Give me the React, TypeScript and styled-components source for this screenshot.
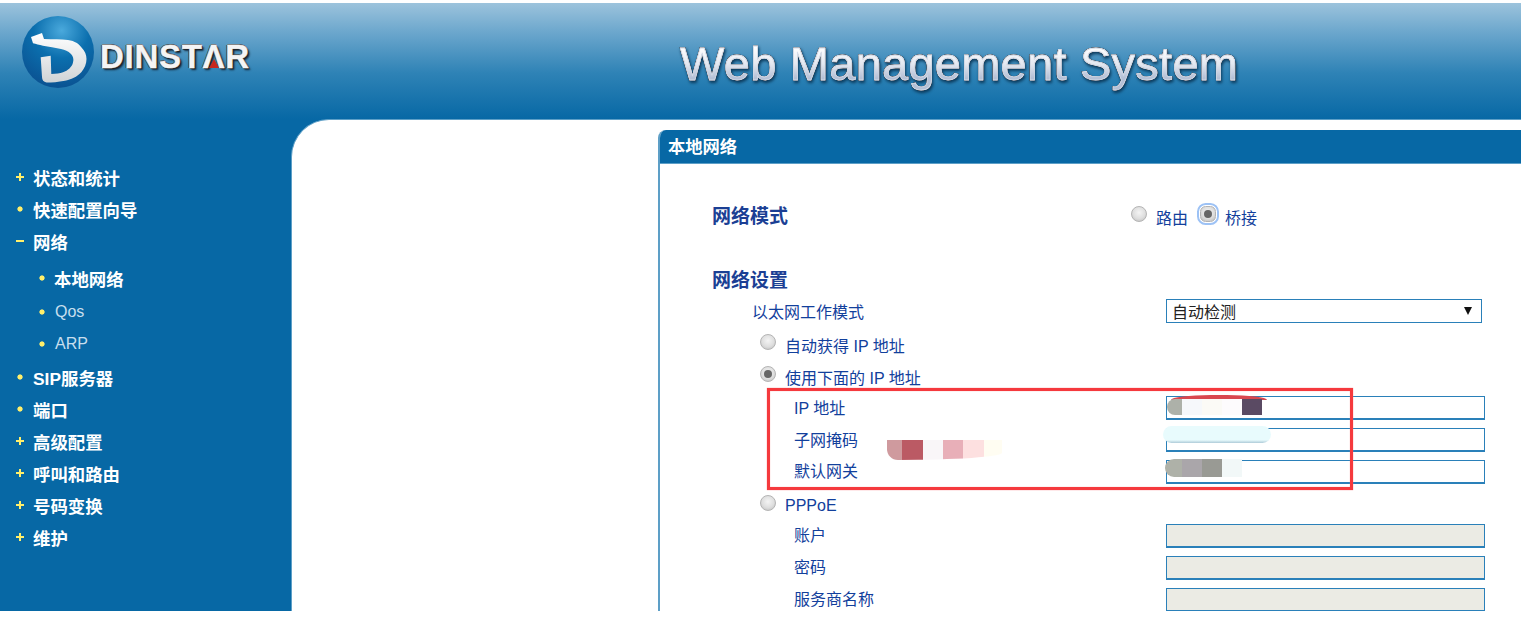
import React from 'react';
import styled, { createGlobalStyle } from 'styled-components';

const GlobalStyle = createGlobalStyle`
  html, body {
    margin: 0;
    padding: 0;
    background: #fff;
  }
  * {
    box-sizing: border-box;
  }
`;

const CJK = `"Liberation Sans", "Noto Sans CJK SC", sans-serif`;

const Page = styled.div`
  width: 1530px;
  height: 640px;
  padding: 3px 9px 29px 0;
  overflow: hidden;
  background: #fff;
  font-family: ${CJK};
`;

const Frame = styled.div`
  height: 608px;
  display: flex;
  flex-direction: column;
`;

const Header = styled.header`
  flex: 0 0 116px;
  display: flex;
  background: linear-gradient(180deg, #9cc3dc 0%, #6ca7cd 25%, #2f83b6 60%, #0768a5 100%);
`;

const LogoArea = styled.div`
  width: 292px;
  display: flex;
  align-items: flex-start;
  padding: 11px 0 0 20px;
`;

const LogoWord = styled.span`
  margin: 26px 0 0 4px;
  font: bold 33px "Liberation Sans", sans-serif;
  line-height: 34px;
  letter-spacing: 0.7px;
  color: #f4f4f4;
  -webkit-text-stroke: 0.4px #f4f4f4;
  text-shadow: 1px 1px 0 #222, -1px 0 0 #333, 0 -1px 0 #555, 2px 2px 2px #123;
`;

const RedA = styled.span`
  position: relative;
  display: inline-block;
  &::after {
    content: '';
    position: absolute;
    left: 50%;
    bottom: 6px;
    margin-left: -5px;
    border-left: 5px solid transparent;
    border-right: 5px solid transparent;
    border-bottom: 9px solid #c8281f;
  }
`;

const Title = styled.h1`
  margin: 33px 0 0 388px;
  height: 56px;
  font: 400 47px "Liberation Sans", sans-serif;
  line-height: 56px;
  letter-spacing: 0.25px;
  white-space: nowrap;
  color: transparent;
  -webkit-text-stroke: 0.8px #d3dbe8;
  background: linear-gradient(180deg, #fff 20%, #e4e8f0 50%, #b4c0d6 75%);
  background-clip: text;
  -webkit-background-clip: text;
  filter: drop-shadow(0 0 0.6px #0c141c) drop-shadow(0 0 0.6px #0c141c) drop-shadow(1px 2px 1.5px #0b3a5c);
`;

const Body = styled.div`
  flex: 1;
  display: flex;
  min-height: 0;
  background: #0768a5;
`;

const Sidebar = styled.nav`
  flex: 0 0 291px;
  padding-top: 42px;
`;

const MenuRow = styled.div<{ $sub?: boolean; $bold?: boolean; $gap?: number }>`
  height: 32px;
  display: flex;
  align-items: center;
  padding-left: ${(p) => (p.$sub ? 37 : 15)}px;
  padding-top: ${(p) => (p.$bold === false ? 3 : 0)}px;
  margin-top: ${(p) => p.$gap ?? 0}px;
  color: ${(p) => (p.$bold === false ? '#c7dfee' : '#fff')};
  font-size: ${(p) => (p.$bold === false ? 16 : 17.4)}px;
  font-weight: ${(p) => (p.$bold === false ? 400 : 700)};
`;

const MARK = '#ffef6b';
const hBar = `linear-gradient(${MARK}, ${MARK}) center / 8px 2px no-repeat`;
const vBar = `linear-gradient(${MARK}, ${MARK}) center / 2px 8px no-repeat`;
const dot = `radial-gradient(circle, ${MARK} 2.2px, transparent 3px)`;

const Marker = styled.span<{ $kind: 'plus' | 'minus' | 'dot'; $tight?: boolean }>`
  flex: none;
  width: 10px;
  height: 8px;
  margin-right: ${(p) => (p.$tight ? 7 : 8)}px;
  background: ${(p) => (p.$kind === 'plus' ? `${hBar}, ${vBar}` : p.$kind === 'minus' ? hBar : dot)};
`;

const Content = styled.main`
  flex: 1;
  min-width: 0;
  background: #fff;
  border-top: 1px solid #5d9fc7;
  border-left: 1px solid #5d9fc7;
  border-top-left-radius: 38px;
  padding: 10px 0 0 366px;
`;

const Panel = styled.section`
  height: 100%;
  border-left: 2px solid #5d9fc7;
  border-top-left-radius: 8px;
  overflow: hidden;
`;

const PanelHead = styled.div`
  height: 34px;
  margin-left: -2px;
  padding: 0 0 3px 10px;
  display: flex;
  align-items: center;
  background: #0768a5;
  border-bottom: 1px solid #5d9fc7;
  color: #fff;
  font-size: 17.3px;
  font-weight: 700;
`;

const PanelBody = styled.div`
  padding-left: 52px;
  color: #12409c;
  font-size: 16px;
`;

const Heading = styled.div`
  font-size: 19px;
  font-weight: 700;
  line-height: 28px;
  color: #1b3f94;
`;

const ModeRow = styled.div`
  height: 36px;
  margin-top: 35px;
  display: grid;
  grid-template-columns: 419px 1fr;
  align-items: center;
`;

const RadioGroup = styled.div`
  display: flex;
  align-items: center;
  padding-top: 4px;
  line-height: 20px;
`;

const Radio = styled.span<{ $checked?: boolean; $focus?: boolean; $left?: number; $raise?: number }>`
  flex: none;
  position: relative;
  top: ${(p) => -(p.$raise ?? 3)}px;
  width: 16px;
  height: 16px;
  border-radius: 50%;
  margin: 0 9px 0 ${(p) => p.$left ?? 0}px;
  background: radial-gradient(circle at 50% 40%, #f4f4f4 0%, #dedede 55%, #b9b9b9 100%);
  border: 1px solid #b4b4b4;
  ${(p) => p.$focus && 'outline: 2px solid #9dc2f5; outline-offset: 1px; border-radius: 35%;'}
  &::after {
    content: '';
    display: ${(p) => (p.$checked ? 'block' : 'none')};
    position: absolute;
    inset: 3px;
    border-radius: 50%;
    background: #666;
  }
`;

const SettingsHead = styled(Heading)`
  margin-top: 32px;
`;

const FormRow = styled.div<{ $indent: number }>`
  height: 32px;
  display: grid;
  grid-template-columns: ${(p) => 454 - p.$indent}px 319px;
  align-items: center;
  padding-left: ${(p) => p.$indent}px;
`;

const Label = styled.span<{ $up?: boolean }>`
  margin-bottom: ${(p) => (p.$up ? 2 : 0)}px;
`;

const SelectBox = styled.div`
  width: 316px;
  height: 24px;
  padding: 0 9px 0 5px;
  display: flex;
  align-items: center;
  justify-content: space-between;
  border: 1px solid #2a80b9;
  color: #222;
  font-size: 16px;
`;

const Arrow = styled.span`
  border-left: 4px solid transparent;
  border-right: 4px solid transparent;
  border-top: 8px solid #111;
`;

const OptionRow = styled.div<{ $pt?: number }>`
  height: 32px;
  padding: ${(p) => p.$pt ?? 4}px 0 0 48px;
  display: flex;
  align-items: center;
`;

const Field = styled.div<{ $disabled?: boolean }>`
  position: relative;
  width: 319px;
  height: 24px;
  margin-top: 2px;
  border: 1px solid #2a80b9;
  border-bottom-width: 2px;
  background: ${(p) => (p.$disabled ? '#ebebe4' : '#fff')};
`;

/* the pixelated patches that hide the addresses in the screenshot */
const Blur = styled.div<{ $left: number; $top: number; $w: number; $h: number; $bg: string; $round?: string }>`
  position: absolute;
  left: ${(p) => p.$left}px;
  top: ${(p) => p.$top}px;
  width: ${(p) => p.$w}px;
  height: ${(p) => p.$h}px;
  background: ${(p) => p.$bg};
  border-radius: ${(p) => p.$round ?? '0'};
`;

const Highlight = styled.div`
  position: absolute;
  left: 767px;
  top: 388px;
  width: 586px;
  height: 102px;
  border: 3px solid #f5393d;
  box-shadow: 0 0 1px #f5797c, inset 0 0 1px #f5797c;
  pointer-events: none;
`;

const DinstarMark = () => (
  <svg width="76" height="76" viewBox="0 0 76 76">
    <defs>
      <radialGradient id="ball" cx="0.55" cy="0.2" r="0.85">
        <stop offset="0" stopColor="#4aa9dc" />
        <stop offset="0.45" stopColor="#0b6fae" />
        <stop offset="1" stopColor="#0a4f8f" />
      </radialGradient>
      <linearGradient id="dee" x1="0" y1="0" x2="0" y2="1">
        <stop offset="0" stopColor="#fff" />
        <stop offset="1" stopColor="#cfd3d6" />
      </linearGradient>
    </defs>
    <circle cx="38" cy="38" r="36" fill="url(#ball)" />
    <path
      d="M11 23 L22 19 L24 25 C33 25.5 41 25 48 26 C55 27 59 30 61.5 33.5 C65 37 66.5 41 66.5 45 C66.5 50 64.5 54 61.5 58 C57 63 51 65.5 45 66.7 C38 68 32 68.5 26.5 68.5 C23.5 68 22 66 22 63 L20.7 43.3 L30.7 41.7 L31.3 60 C36 60 40 59.5 43 58.3 C48 56.5 52 53 53 48.5 C54 45 53 42 51 40 C48 37 45 36 41 35 C35 33.5 29 32.5 23 31.7 C19 31 16 30 13 29.3 Z"
      fill="url(#dee)"
    />
  </svg>
);

const menuBottom = ['高级配置', '呼叫和路由', '号码变换', '维护'];

export default function App() {
  return (
    <>
      <GlobalStyle />
      <Page>
        <Frame>
          <Header>
            <LogoArea>
              <DinstarMark />
              <LogoWord>
                DINST<RedA>Λ</RedA>R
              </LogoWord>
            </LogoArea>
            <Title>Web Management System</Title>
          </Header>
          <Body>
            <Sidebar>
              <MenuRow>
                <Marker $kind="plus" />
                状态和统计
              </MenuRow>
              <MenuRow>
                <Marker $kind="dot" />
                快速配置向导
              </MenuRow>
              <MenuRow>
                <Marker $kind="minus" />
                网络
              </MenuRow>
              <MenuRow $sub $gap={5}>
                <Marker $kind="dot" $tight />
                本地网络
              </MenuRow>
              <MenuRow $sub $bold={false}>
                <Marker $kind="dot" />
                Qos
              </MenuRow>
              <MenuRow $sub $bold={false}>
                <Marker $kind="dot" />
                ARP
              </MenuRow>
              <MenuRow $gap={3}>
                <Marker $kind="dot" />
                SIP服务器
              </MenuRow>
              <MenuRow>
                <Marker $kind="dot" />
                端口
              </MenuRow>
              {menuBottom.map((label) => (
                <MenuRow key={label}>
                  <Marker $kind="plus" />
                  {label}
                </MenuRow>
              ))}
            </Sidebar>
            <Content>
              <Panel>
                <PanelHead>本地网络</PanelHead>
                <PanelBody>
                  <ModeRow>
                    <Heading>网络模式</Heading>
                    <RadioGroup>
                      <Radio $raise={5} />
                      路由
                      <Radio $checked $focus $raise={5} $left={12} />
                      桥接
                    </RadioGroup>
                  </ModeRow>
                  <SettingsHead>网络设置</SettingsHead>
                  <FormRow $indent={40}>
                    <Label>以太网工作模式</Label>
                    <SelectBox>
                      自动检测
                      <Arrow />
                    </SelectBox>
                  </FormRow>
                  <OptionRow>
                    <Radio />
                    自动获得 IP 地址
                  </OptionRow>
                  <OptionRow>
                    <Radio $checked />
                    使用下面的 IP 地址
                  </OptionRow>
                  <FormRow $indent={82}>
                    <Label>IP 地址</Label>
                    <Field>
                      <Blur $left={4} $top={-2} $w={96} $h={5} $bg="#d9474f" $round="40px 40px 0 0 / 5px 5px 0 0" />
                      <Blur $left={0} $top={2} $w={95} $h={16} $bg="linear-gradient(90deg, #adb1a9 0 16%, #f6f8fb 16% 37%, #fbfaf6 37% 58%, #fdfbfd 58% 79%, #5a4a63 79%)" $round="9px 0 0 9px" />
                    </Field>
                  </FormRow>
                  <FormRow $indent={82}>
                    <Label>子网掩码</Label>
                    <Field>
                      <Blur $left={-4} $top={-3} $w={108} $h={17} $bg="linear-gradient(180deg, #e8fbfd 82%, #aecbd8 100%)" $round="9px" />
                    </Field>
                  </FormRow>
                  <FormRow $indent={82}>
                    <Label $up>默认网关</Label>
                    <Field>
                      <Blur $left={-2} $top={-2} $w={77} $h={18} $bg="linear-gradient(90deg, #aeb1a8 0 22%, #aaa6aa 22% 48%, #999a94 48% 74%, #f2f8f8 74%)" $round="9px 0 0 9px" />
                    </Field>
                  </FormRow>
                  <OptionRow $pt={5}>
                    <Radio />
                    PPPoE
                  </OptionRow>
                  <FormRow $indent={82}>
                    <Label $up>账户</Label>
                    <Field $disabled />
                  </FormRow>
                  <FormRow $indent={82}>
                    <Label $up>密码</Label>
                    <Field $disabled />
                  </FormRow>
                  <FormRow $indent={82}>
                    <Label $up>服务商名称</Label>
                    <Field $disabled />
                  </FormRow>
                </PanelBody>
              </Panel>
            </Content>
          </Body>
        </Frame>
        <Highlight>
          <Blur $left={117} $top={49} $w={115} $h={20} $bg="linear-gradient(90deg, #cf9a9e 0 13%, #bb5a64 13% 31%, #f9f6f8 31% 49%, #e8afb8 49% 66%, #fde0e0 66% 84%, #fffdf2 84%)" $round="0 0 115px 12px / 0 0 8px 12px" />
        </Highlight>
      </Page>
    </>
  );
}
